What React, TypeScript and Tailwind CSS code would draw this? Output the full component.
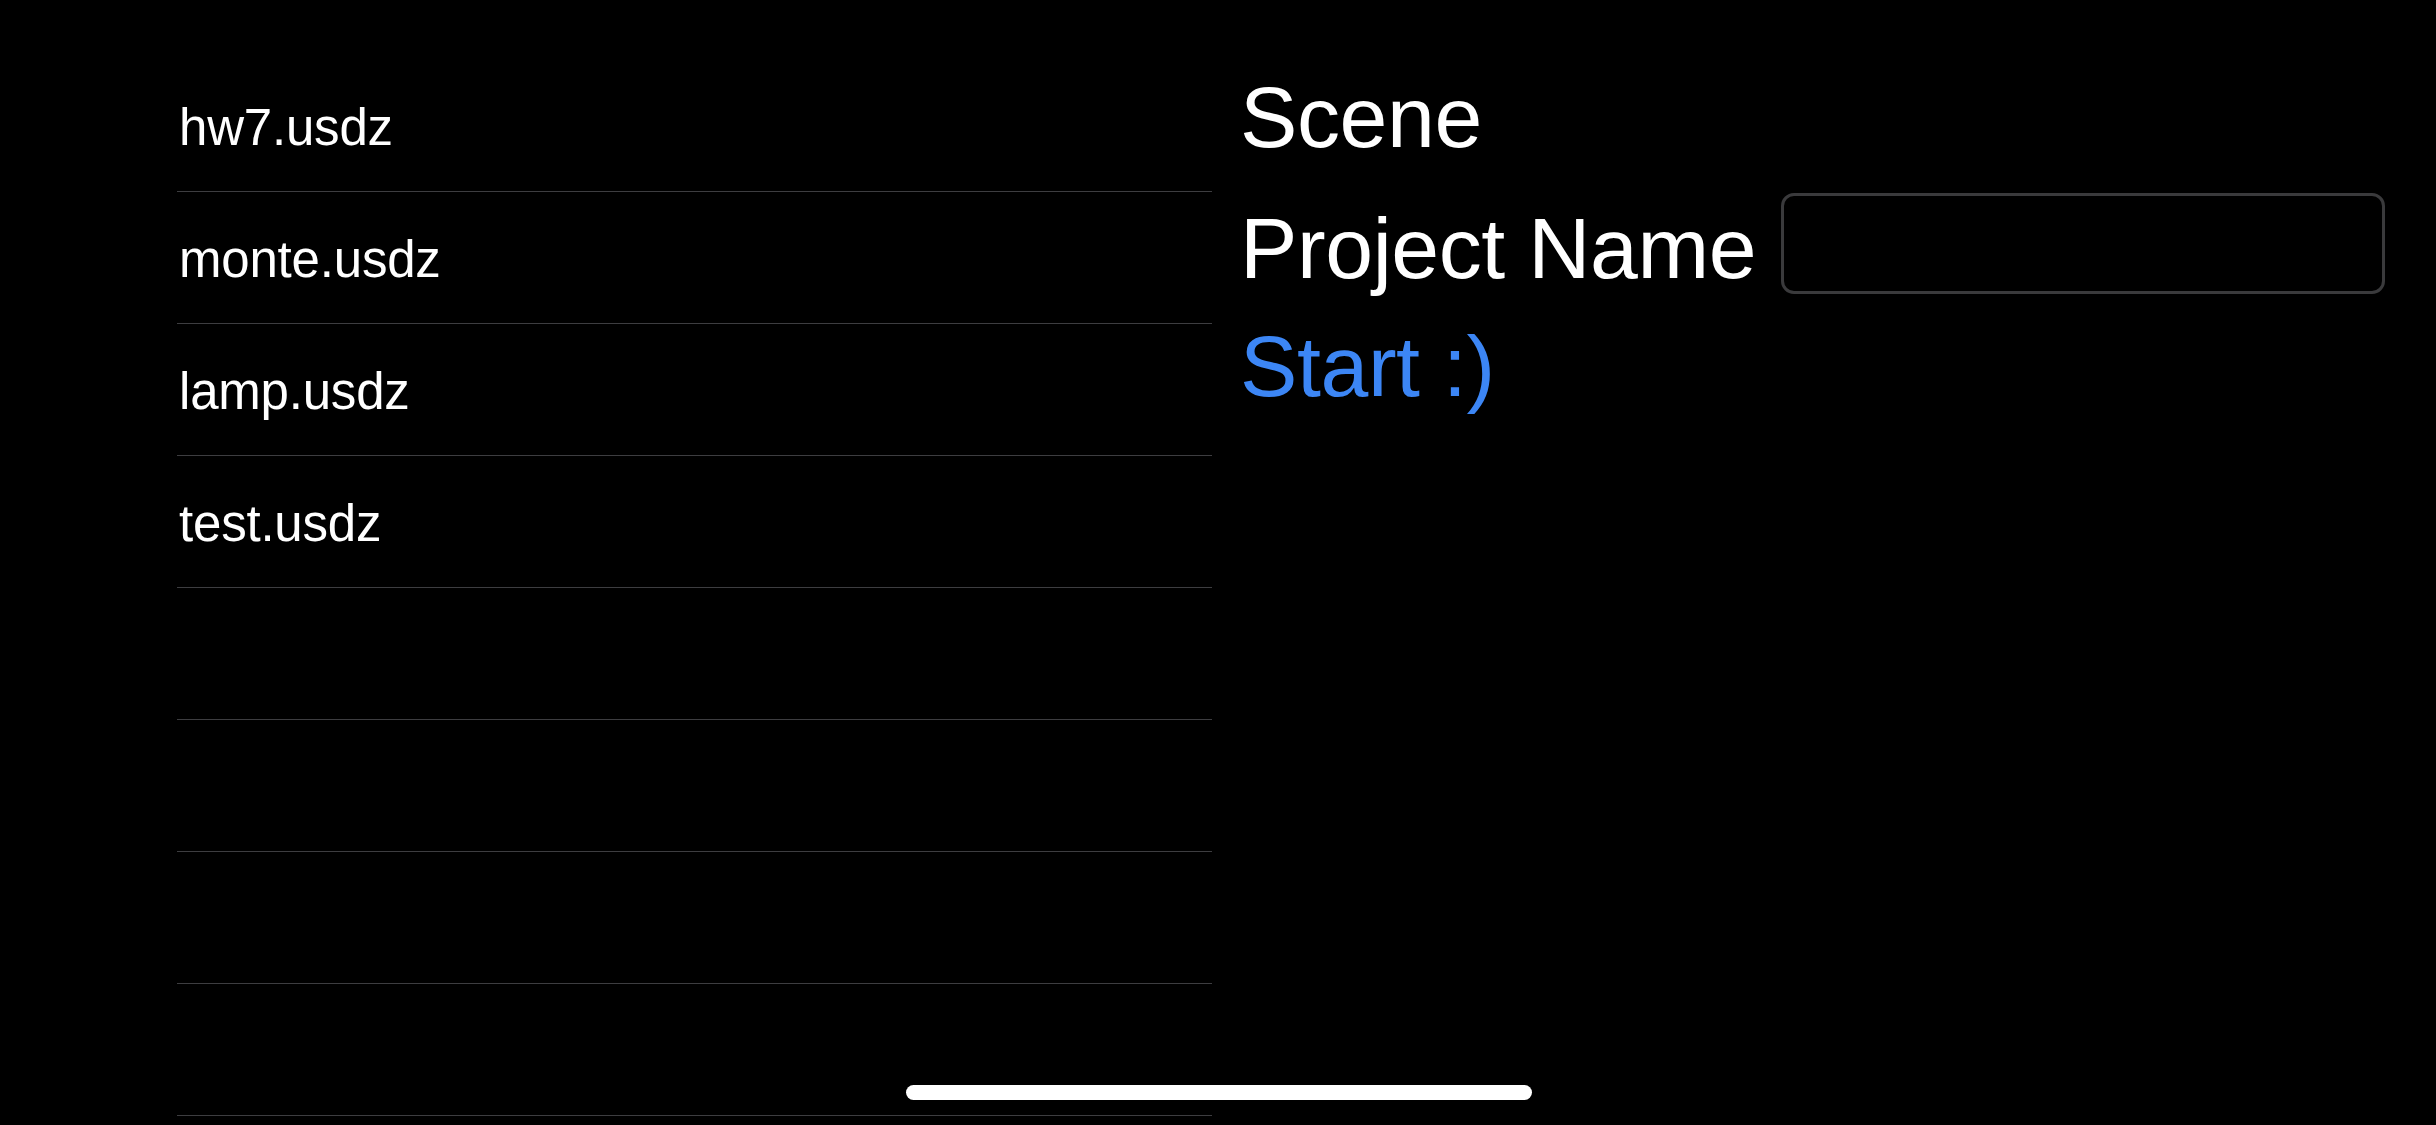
const files = ["hw7.usdz", "monte.usdz", "lamp.usdz", "test.usdz", "", "", "", "", ""];

function FileList() {
  return (
    <div className="w-[1035px] shrink-0 pt-[60px]">
      {files.map((name, i) => (
        <div
          key={i}
          className="h-[132px] flex items-center border-b border-[#3d3d40] pt-[6px] pl-[2px]"
        >
          <span className="text-[51px] tracking-[-0.2px] text-white">{name}</span>
        </div>
      ))}
    </div>
  );
}

function SceneForm() {
  return (
    <div className="ml-[28px] flex flex-col items-start text-[86px] leading-none tracking-[-0.4px]">
      <div className="mt-[74px] text-white">Scene</div>
      <div className="mt-[33px] flex items-start">
        <span className="mt-[12px] text-white">Project Name</span>
        <input
          type="text"
          className="ml-[25px] w-[604px] h-[101px] rounded-[13px] border-[3px] border-[#3a3a3c] bg-black px-4 text-[51px] text-white outline-none"
        />
      </div>
      <button className="mt-[29px] text-[#3c86f5] leading-none">Start :)</button>
    </div>
  );
}

export default function App() {
  return (
    <div
      className="relative w-[2436px] h-[1125px] overflow-hidden bg-black flex pl-[177px]"
      style={{ fontFamily: '"Liberation Sans", Arial, sans-serif' }}
    >
      <FileList />
      <SceneForm />
      {/* home indicator */}
      <div className="absolute left-[906px] top-[1085px] w-[626px] h-[15px] rounded-full bg-white" />
    </div>
  );
}
